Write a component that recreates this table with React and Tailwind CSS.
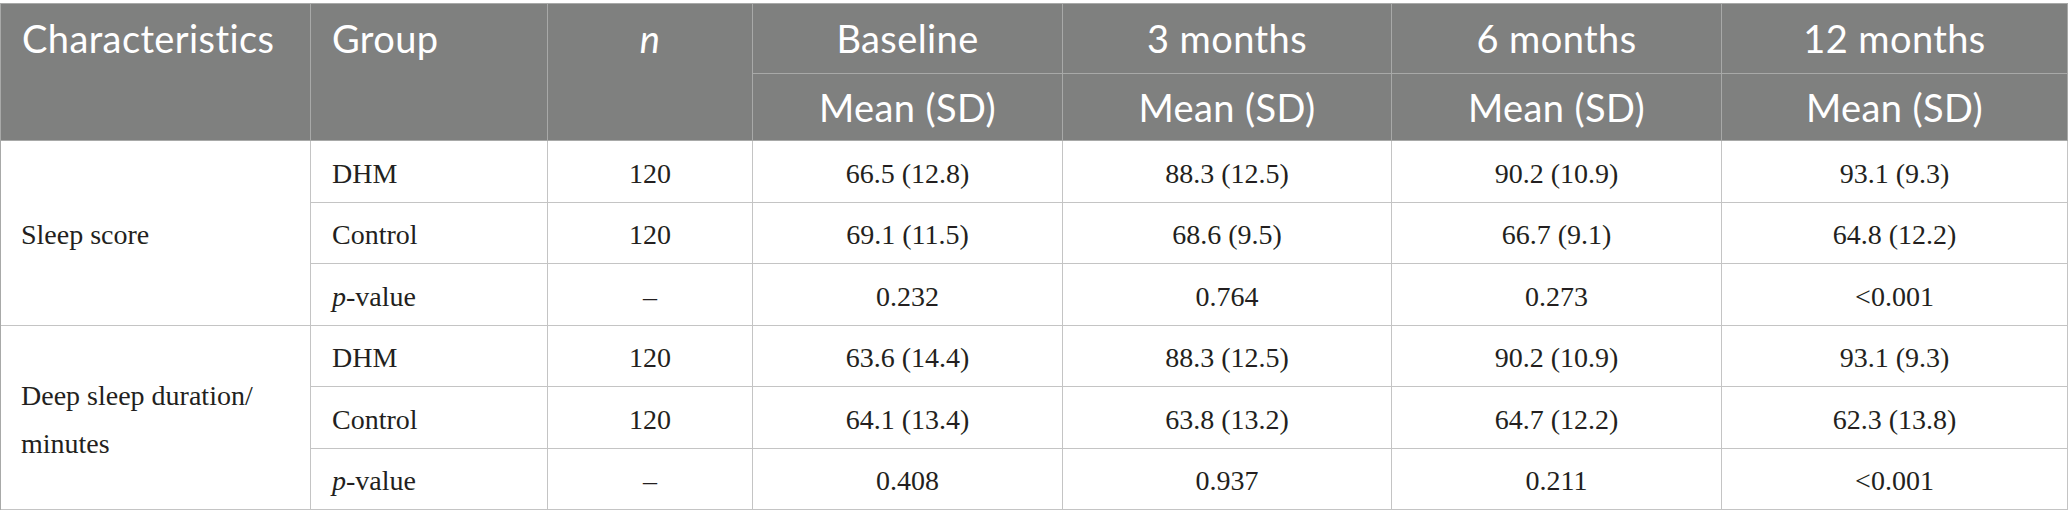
import {Fragment} from "react";

const head = "border-r border-b border-[#a8a9a8] text-white bg-[#7f807f] font-['Lato',sans-serif] text-[38px] tracking-[0.4px]";
const body = "border-r border-b border-[#c4c4c4] flex items-center pt-1 font-['Liberation_Serif',serif] text-[28px]";

const rows = [
    {label: "Sleep score", data: [
        ["DHM", "120", "66.5 (12.8)", "88.3 (12.5)", "90.2 (10.9)", "93.1 (9.3)"],
        ["Control", "120", "69.1 (11.5)", "68.6 (9.5)", "66.7 (9.1)", "64.8 (12.2)"],
        ["p", "–", "0.232", "0.764", "0.273", "<0.001"],
    ]},
    {label: "Deep sleep duration/ minutes", data: [
        ["DHM", "120", "63.6 (14.4)", "88.3 (12.5)", "90.2 (10.9)", "93.1 (9.3)"],
        ["Control", "120", "64.1 (13.4)", "63.8 (13.2)", "64.7 (12.2)", "62.3 (13.8)"],
        ["p", "–", "0.408", "0.937", "0.211", "<0.001"],
    ]},
];

const periods = ["Baseline", "3 months", "6 months", "12 months"];

const App = () => {
    return (
        <div className="w-[2068px] h-[528px] overflow-hidden bg-white pt-[3px]">
            <div
                className="grid border-t border-l border-[#a8a9a8] grid-cols-[310px_237px_205px_310px_329px_330px_346px] grid-rows-[70px_67px_62px_61px_62px_61px_62px_61px] text-[#231f20]">

                {/* header */}
                <div className={`${head} row-span-2`}>
                    <div className="h-[69px] flex items-center pl-[21px]">Characteristics</div>
                </div>
                <div className={`${head} row-span-2`}>
                    <div className="h-[69px] flex items-center pl-[21px]">Group</div>
                </div>
                <div className={`${head} row-span-2`}>
                    <div className="h-[69px] flex items-center justify-center italic">n</div>
                </div>
                {periods.map((p) =>
                    <div key={p} className={`${head} flex items-center justify-center`}>{p}</div>)}
                {periods.map((p) =>
                    <div key={p + "-sd"} className={`${head} flex items-center justify-center`}>Mean (SD)</div>)}

                {/* body */}
                {rows.map((r) => <Fragment key={r.label}>
                    <div className={`${body} row-span-3 pl-5 pr-4 leading-[48px]`}>
                        {r.label}
                    </div>
                    {r.data.map((d) => d.map((v, i) =>
                        <div key={r.label + d[0] + i}
                             className={`${body} ${i === 0 ? "pl-[21px]" : "justify-center"}`}>
                            {i === 0 && v === "p" ? <span><i>p</i>-value</span> : v}
                        </div>))}
                </Fragment>)}
            </div>
        </div>
    );
};

export default App;
